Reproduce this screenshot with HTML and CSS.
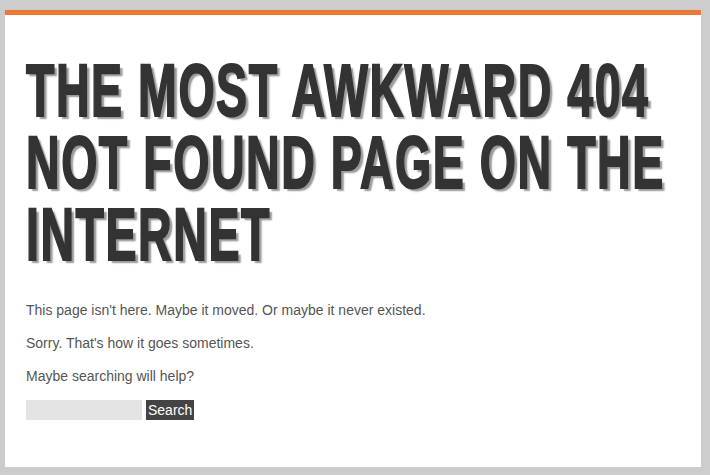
FILE: index.html
```html
<!DOCTYPE html>
<html lang="en">
<head>
    <meta charset="UTF-8">
    <meta name="viewport" content="width=device-width, initial-scale=1.0">
    <title>404 - Not Found</title>
    <link rel="stylesheet" href="styles.css">
</head>
<body>
    <div class="page">
        <h1 class="title">The most awkward 404 not found page on the internet</h1>

        <p>This page isn't here. Maybe it moved. Or maybe it never existed.</p>
        <p>Sorry. That's how it goes sometimes.</p>
        <p>Maybe searching will help?</p>

        <form class="search" action="#">
            <input type="text" name="s">
            <button type="submit">Search</button>
        </form>
    </div>
</body>
</html>
```

FILE: styles.css
```css
html, body {
    height: 100%;
}
body {
    margin: 0;
    padding: 10px 9px 8px 5px;
    box-sizing: border-box;
    background: #ccc;
    font-family: "Liberation Sans", Arial, sans-serif;
    font-size: 14px;
    color: #555;
}
.page {
    box-sizing: border-box;
    height: 100%;
    background: #fff;
    border-top: 5px solid #ec7836;
    padding: 20px 21px;
    overflow: hidden;
}
.title {
    width: 1090px;
    margin: 19px 0 31px;
    font-family: "Liberation Sans", Arial, sans-serif;
    font-size: 75px;
    font-weight: bold;
    line-height: 72px;
    letter-spacing: 2.5px;
    text-transform: uppercase;
    color: #333;
    -webkit-text-stroke: 2px #333;
    text-shadow: 5px 3px 2px #999;
    transform: scaleX(0.62);
    transform-origin: left top;
}
p {
    margin: 0 0 14px;
    line-height: 19px;
}
.search {
    display: flex;
    gap: 4px;
}
.search input {
    width: 116px;
    height: 20px;
    box-sizing: border-box;
    border: none;
    padding: 0 4px;
    background: #e4e4e4;
}
.search button {
    height: 20px;
    padding: 0 2px;
    border: none;
    background: #444;
    color: #fff;
    font-family: "Liberation Sans", Arial, sans-serif;
    font-size: 14px;
}
```
